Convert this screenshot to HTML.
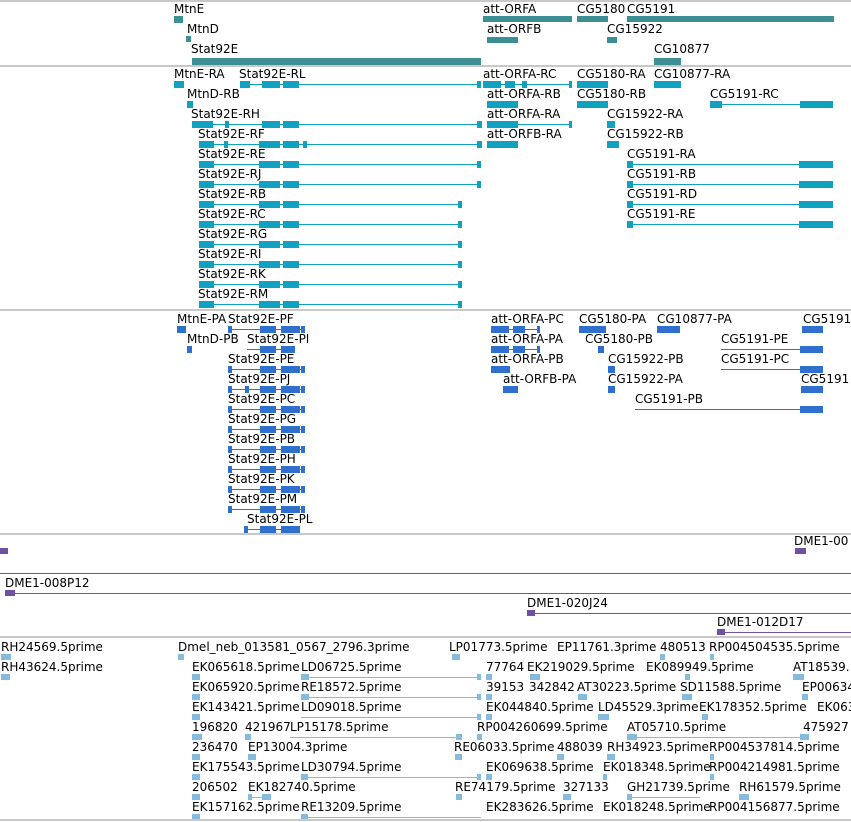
<!DOCTYPE html>
<html><head><meta charset="utf-8"><style>
body{margin:0;width:851px;height:822px;background:#fff;position:relative;overflow:hidden;font-family:"DejaVu Sans","Liberation Sans",sans-serif}
div{position:absolute}
.l{font-size:12px;line-height:14px;white-space:nowrap;color:#000}
.s{left:0;width:851px;height:2px;background:#c8c8c8}
.c1{color:#3d8f96}.c2{color:#10a0c0}.c3{color:#2f6fce}.c4{color:#7050a0}.c5{color:#86bbe0}
.h,.k{background:currentColor}
.h{height:1px}.k{height:7px}
</style></head><body>
<div class="s" style="top:0"></div>
<div class="s" style="top:65px"></div>
<div class="s" style="top:309px"></div>
<div class="s" style="top:533px"></div>
<div class="s" style="top:636px"></div>
<div class="s" style="top:819px"></div>

<!-- track 1 genes -->
<div class="c1">
<div class="l" style="left:174px;top:2px">MtnE</div>
<div class="l" style="left:187px;top:22px">MtnD</div>
<div class="l" style="left:191px;top:42px">Stat92E</div>
<div class="l" style="left:483px;top:2px">att-ORFA</div>
<div class="l" style="left:577px;top:2px">CG5180</div>
<div class="l" style="left:627px;top:2px">CG5191</div>
<div class="l" style="left:487px;top:22px">att-ORFB</div>
<div class="l" style="left:607px;top:22px">CG15922</div>
<div class="l" style="left:654px;top:42px">CG10877</div>
<div class="k" style="left:174px;top:16px;width:9px"></div>
<div class="k" style="left:186px;top:36px;width:5px;height:6px"></div>
<div class="k" style="left:192px;top:58px;width:289px"></div>
<div class="k" style="left:483px;top:16px;width:89px;height:6px"></div>
<div class="k" style="left:577px;top:16px;width:31px;height:6px"></div>
<div class="k" style="left:627px;top:16px;width:207px;height:6px"></div>
<div class="k" style="left:487px;top:37px;width:31px;height:6px"></div>
<div class="k" style="left:607px;top:37px;width:10px;height:6px"></div>
<div class="k" style="left:654px;top:58px;width:27px"></div>
</div>

<!-- track 2 transcripts -->
<div class="c2">
<div class="l" style="left:174px;top:67px">MtnE-RA</div>
<div class="k" style="left:174px;top:81px;width:10px"></div>
<div class="l" style="left:239px;top:67px">Stat92E-RL</div>
<div class="h" style="left:240px;top:84px;width:241px"></div>
<div class="k" style="left:240px;top:81px;width:10px"></div><div class="k" style="left:262px;top:81px;width:18px"></div><div class="k" style="left:283px;top:81px;width:16px"></div><div class="k" style="left:477px;top:81px;width:4px"></div>
<div class="l" style="left:483px;top:67px">att-ORFA-RC</div>
<div class="h" style="left:483px;top:84px;width:89px"></div>
<div class="k" style="left:483px;top:81px;width:18px"></div><div class="k" style="left:505px;top:81px;width:10px"></div><div class="k" style="left:522px;top:81px;width:5px"></div><div class="k" style="left:569px;top:81px;width:3px"></div>
<div class="l" style="left:577px;top:67px">CG5180-RA</div>
<div class="k" style="left:577px;top:81px;width:31px"></div>
<div class="l" style="left:654px;top:67px">CG10877-RA</div>
<div class="k" style="left:654px;top:81px;width:27px"></div>

<div class="l" style="left:187px;top:87px">MtnD-RB</div>
<div class="k" style="left:187px;top:101px;width:6px"></div>
<div class="l" style="left:487px;top:87px">att-ORFA-RB</div>
<div class="k" style="left:487px;top:101px;width:31px"></div>
<div class="l" style="left:577px;top:87px">CG5180-RB</div>
<div class="k" style="left:577px;top:101px;width:31px"></div>
<div class="l" style="left:710px;top:87px">CG5191-RC</div>
<div class="h" style="left:710px;top:104px;width:90px"></div>
<div class="k" style="left:710px;top:101px;width:12px"></div><div class="k" style="left:800px;top:101px;width:33px"></div>

<div class="l" style="left:191px;top:107px">Stat92E-RH</div>
<div class="h" style="left:192px;top:124px;width:289px"></div>
<div class="k" style="left:192px;top:121px;width:21px"></div><div class="k" style="left:225px;top:121px;width:4px"></div><div class="k" style="left:262px;top:121px;width:18px"></div><div class="k" style="left:283px;top:121px;width:16px"></div><div class="k" style="left:477px;top:121px;width:4px"></div>
<div class="l" style="left:487px;top:107px">att-ORFA-RA</div>
<div class="h" style="left:487px;top:124px;width:85px"></div>
<div class="k" style="left:480px;top:121px;width:2px"></div><div class="k" style="left:487px;top:121px;width:31px"></div><div class="k" style="left:569px;top:121px;width:3px"></div>
<div class="l" style="left:607px;top:107px">CG15922-RA</div>
<div class="k" style="left:607px;top:121px;width:8px"></div>

<div class="l" style="left:198px;top:127px">Stat92E-RF</div>
<div class="h" style="left:199px;top:144px;width:282px"></div>
<div class="k" style="left:199px;top:141px;width:15px"></div><div class="k" style="left:224px;top:141px;width:4px"></div><div class="k" style="left:259px;top:141px;width:21px"></div><div class="k" style="left:283px;top:141px;width:16px"></div><div class="k" style="left:303px;top:141px;width:4px"></div><div class="k" style="left:477px;top:141px;width:4px"></div>
<div class="l" style="left:487px;top:127px">att-ORFB-RA</div>
<div class="k" style="left:480px;top:141px;width:2px"></div><div class="k" style="left:487px;top:141px;width:31px"></div>
<div class="l" style="left:607px;top:127px">CG15922-RB</div>
<div class="k" style="left:607px;top:141px;width:12px"></div>
</div>

<!-- Stat92E transcripts rows 4-11 -->
<div class="c2">
<div class="l" style="left:198px;top:147px">Stat92E-RE</div>
<div class="h" style="left:199px;top:164px;width:282px"></div><div class="k" style="left:199px;top:161px;width:15px"></div><div class="k" style="left:259px;top:161px;width:21px"></div><div class="k" style="left:283px;top:161px;width:16px"></div><div class="k" style="left:477px;top:161px;width:4px"></div>
<div class="l" style="left:198px;top:167px">Stat92E-RJ</div>
<div class="h" style="left:199px;top:184px;width:282px"></div><div class="k" style="left:199px;top:181px;width:15px"></div><div class="k" style="left:259px;top:181px;width:21px"></div><div class="k" style="left:283px;top:181px;width:16px"></div><div class="k" style="left:477px;top:181px;width:4px"></div>
<div class="l" style="left:198px;top:187px">Stat92E-RB</div>
<div class="h" style="left:199px;top:204px;width:263px"></div><div class="k" style="left:199px;top:201px;width:15px"></div><div class="k" style="left:259px;top:201px;width:21px"></div><div class="k" style="left:283px;top:201px;width:16px"></div><div class="k" style="left:458px;top:201px;width:4px"></div>
<div class="l" style="left:198px;top:207px">Stat92E-RC</div>
<div class="h" style="left:199px;top:224px;width:263px"></div><div class="k" style="left:199px;top:221px;width:15px"></div><div class="k" style="left:259px;top:221px;width:21px"></div><div class="k" style="left:283px;top:221px;width:16px"></div><div class="k" style="left:458px;top:221px;width:4px"></div>
<div class="l" style="left:198px;top:227px">Stat92E-RG</div>
<div class="h" style="left:199px;top:244px;width:263px"></div><div class="k" style="left:199px;top:241px;width:15px"></div><div class="k" style="left:259px;top:241px;width:21px"></div><div class="k" style="left:283px;top:241px;width:16px"></div><div class="k" style="left:458px;top:241px;width:4px"></div>
<div class="l" style="left:198px;top:247px">Stat92E-RI</div>
<div class="h" style="left:199px;top:264px;width:263px"></div><div class="k" style="left:199px;top:261px;width:15px"></div><div class="k" style="left:259px;top:261px;width:21px"></div><div class="k" style="left:283px;top:261px;width:16px"></div><div class="k" style="left:458px;top:261px;width:4px"></div>
<div class="l" style="left:198px;top:267px">Stat92E-RK</div>
<div class="h" style="left:199px;top:284px;width:263px"></div><div class="k" style="left:199px;top:281px;width:15px"></div><div class="k" style="left:259px;top:281px;width:21px"></div><div class="k" style="left:283px;top:281px;width:16px"></div><div class="k" style="left:458px;top:281px;width:4px"></div>
<div class="l" style="left:198px;top:287px">Stat92E-RM</div>
<div class="h" style="left:199px;top:304px;width:263px"></div><div class="k" style="left:199px;top:301px;width:15px"></div><div class="k" style="left:259px;top:301px;width:21px"></div><div class="k" style="left:283px;top:301px;width:16px"></div><div class="k" style="left:458px;top:301px;width:4px"></div>

<div class="l" style="left:627px;top:147px">CG5191-RA</div>
<div class="h" style="left:627px;top:164px;width:173px"></div><div class="k" style="left:627px;top:161px;width:6px"></div><div class="k" style="left:799px;top:161px;width:34px"></div>
<div class="l" style="left:627px;top:167px">CG5191-RB</div>
<div class="h" style="left:627px;top:184px;width:173px"></div><div class="k" style="left:627px;top:181px;width:6px"></div><div class="k" style="left:799px;top:181px;width:34px"></div>
<div class="l" style="left:627px;top:187px">CG5191-RD</div>
<div class="h" style="left:627px;top:204px;width:173px"></div><div class="k" style="left:627px;top:201px;width:6px"></div><div class="k" style="left:799px;top:201px;width:34px"></div>
<div class="l" style="left:627px;top:207px">CG5191-RE</div>
<div class="h" style="left:627px;top:224px;width:173px"></div><div class="k" style="left:627px;top:221px;width:6px"></div><div class="k" style="left:799px;top:221px;width:34px"></div>
</div>

<!-- track 3 proteins -->
<div class="c3">
<div class="l" style="left:177px;top:312px">MtnE-PA</div>
<div class="k" style="left:177px;top:326px;width:9px"></div>
<div class="l" style="left:187px;top:332px">MtnD-PB</div>
<div class="k" style="left:187px;top:346px;width:5px"></div>
<div class="l" style="left:491px;top:312px">att-ORFA-PC</div>
<div class="h" style="left:491px;top:329px;width:49px"></div><div class="k" style="left:491px;top:326px;width:18px"></div><div class="k" style="left:513px;top:326px;width:12px"></div><div class="k" style="left:537px;top:326px;width:3px"></div>
<div class="l" style="left:491px;top:332px">att-ORFA-PA</div>
<div class="h" style="left:491px;top:349px;width:49px"></div><div class="k" style="left:491px;top:346px;width:18px"></div><div class="k" style="left:513px;top:346px;width:12px"></div><div class="k" style="left:537px;top:346px;width:3px"></div>
<div class="l" style="left:491px;top:352px">att-ORFA-PB</div>
<div class="k" style="left:491px;top:366px;width:19px"></div>
<div class="l" style="left:503px;top:372px">att-ORFB-PA</div>
<div class="k" style="left:503px;top:386px;width:15px"></div>
<div class="l" style="left:579px;top:312px">CG5180-PA</div>
<div class="k" style="left:579px;top:326px;width:27px"></div>
<div class="l" style="left:585px;top:332px">CG5180-PB</div>
<div class="k" style="left:598px;top:346px;width:6px"></div>
<div class="l" style="left:657px;top:312px">CG10877-PA</div>
<div class="k" style="left:657px;top:326px;width:23px"></div>
<div class="l" style="left:803px;top:312px">CG5191</div>
<div class="k" style="left:802px;top:326px;width:21px"></div>
<div class="l" style="left:608px;top:352px">CG15922-PB</div>
<div class="k" style="left:608px;top:366px;width:7px"></div>
<div class="l" style="left:608px;top:372px">CG15922-PA</div>
<div class="k" style="left:608px;top:386px;width:7px"></div>
<div class="l" style="left:721px;top:332px">CG5191-PE</div>
<div class="h" style="left:721px;top:349px;width:80px"></div><div class="k" style="left:800px;top:346px;width:23px"></div>
<div class="l" style="left:721px;top:352px">CG5191-PC</div>
<div class="h" style="left:721px;top:369px;width:80px"></div><div class="k" style="left:800px;top:366px;width:23px"></div>
<div class="l" style="left:801px;top:372px">CG5191</div>
<div class="k" style="left:801px;top:386px;width:22px"></div>
<div class="l" style="left:635px;top:392px">CG5191-PB</div>
<div class="h" style="left:635px;top:409px;width:166px"></div><div class="k" style="left:800px;top:406px;width:23px"></div>

<div class="l" style="left:228px;top:312px">Stat92E-PF</div>
<div class="h" style="left:228px;top:329px;width:77px"></div><div class="k" style="left:228px;top:326px;width:4px"></div><div class="k" style="left:260px;top:326px;width:16px"></div><div class="k" style="left:281px;top:326px;width:19px"></div><div class="k" style="left:301px;top:326px;width:4px"></div>
<div class="l" style="left:247px;top:332px">Stat92E-PI</div>
<div class="h" style="left:247px;top:349px;width:48px"></div><div class="k" style="left:260px;top:346px;width:16px"></div><div class="k" style="left:281px;top:346px;width:14px"></div>
<div class="l" style="left:228px;top:352px">Stat92E-PE</div>
<div class="h" style="left:228px;top:369px;width:77px"></div><div class="k" style="left:228px;top:366px;width:4px"></div><div class="k" style="left:260px;top:366px;width:16px"></div><div class="k" style="left:281px;top:366px;width:19px"></div><div class="k" style="left:301px;top:366px;width:4px"></div>
<div class="l" style="left:228px;top:372px">Stat92E-PJ</div>
<div class="h" style="left:228px;top:389px;width:77px"></div><div class="k" style="left:228px;top:386px;width:4px"></div><div class="k" style="left:245px;top:386px;width:4px"></div><div class="k" style="left:260px;top:386px;width:16px"></div><div class="k" style="left:281px;top:386px;width:19px"></div><div class="k" style="left:301px;top:386px;width:4px"></div>
<div class="l" style="left:228px;top:392px">Stat92E-PC</div>
<div class="h" style="left:228px;top:409px;width:77px"></div><div class="k" style="left:228px;top:406px;width:4px"></div><div class="k" style="left:260px;top:406px;width:16px"></div><div class="k" style="left:281px;top:406px;width:19px"></div><div class="k" style="left:301px;top:406px;width:4px"></div>
<div class="l" style="left:228px;top:412px">Stat92E-PG</div>
<div class="h" style="left:228px;top:429px;width:77px"></div><div class="k" style="left:228px;top:426px;width:4px"></div><div class="k" style="left:260px;top:426px;width:16px"></div><div class="k" style="left:281px;top:426px;width:19px"></div><div class="k" style="left:301px;top:426px;width:4px"></div>
<div class="l" style="left:228px;top:432px">Stat92E-PB</div>
<div class="h" style="left:228px;top:449px;width:77px"></div><div class="k" style="left:228px;top:446px;width:4px"></div><div class="k" style="left:260px;top:446px;width:16px"></div><div class="k" style="left:281px;top:446px;width:19px"></div><div class="k" style="left:301px;top:446px;width:4px"></div>
<div class="l" style="left:228px;top:452px">Stat92E-PH</div>
<div class="h" style="left:228px;top:469px;width:77px"></div><div class="k" style="left:228px;top:466px;width:4px"></div><div class="k" style="left:260px;top:466px;width:16px"></div><div class="k" style="left:281px;top:466px;width:19px"></div><div class="k" style="left:301px;top:466px;width:4px"></div>
<div class="l" style="left:228px;top:472px">Stat92E-PK</div>
<div class="h" style="left:228px;top:489px;width:77px"></div><div class="k" style="left:228px;top:486px;width:4px"></div><div class="k" style="left:260px;top:486px;width:16px"></div><div class="k" style="left:281px;top:486px;width:19px"></div><div class="k" style="left:301px;top:486px;width:4px"></div>
<div class="l" style="left:228px;top:492px">Stat92E-PM</div>
<div class="h" style="left:228px;top:509px;width:77px"></div><div class="k" style="left:228px;top:506px;width:4px"></div><div class="k" style="left:260px;top:506px;width:16px"></div><div class="k" style="left:281px;top:506px;width:19px"></div><div class="k" style="left:301px;top:506px;width:4px"></div>
<div class="l" style="left:247px;top:512px">Stat92E-PL</div>
<div class="h" style="left:244px;top:529px;width:56px"></div><div class="k" style="left:244px;top:526px;width:4px"></div><div class="k" style="left:260px;top:526px;width:16px"></div><div class="k" style="left:281px;top:526px;width:19px"></div>
</div>

<!-- track 4 DME -->
<div class="c4">
<div class="k" style="left:0;top:548px;width:8px;height:6px"></div>
<div class="l" style="left:794px;top:534px">DME1-00</div>
<div class="k" style="left:795px;top:548px;width:11px;height:6px"></div>
<div class="h" style="left:0;top:573px;width:851px"></div>
<div class="l" style="left:5px;top:576px">DME1-008P12</div>
<div class="h" style="left:5px;top:593px;width:846px"></div><div class="k" style="left:5px;top:590px;width:10px;height:6px"></div>
<div class="l" style="left:527px;top:596px">DME1-020J24</div>
<div class="h" style="left:527px;top:613px;width:324px"></div><div class="k" style="left:527px;top:610px;width:8px;height:6px"></div>
<div class="l" style="left:717px;top:615px">DME1-012D17</div>
<div class="h" style="left:717px;top:632px;width:134px"></div><div class="k" style="left:717px;top:629px;width:8px;height:6px"></div>
</div>

<!-- track 5 ESTs -->
<div class="c5">
<div class="l" style="left:1px;top:640px">RH24569.5prime</div><div class="k" style="left:1px;top:654px;width:10px;height:6px"></div>
<div class="l" style="left:178px;top:640px">Dmel_neb_013581_0567_2796.3prime</div><div class="k" style="left:178px;top:654px;width:6px;height:6px"></div>
<div class="l" style="left:449px;top:640px">LP01773.5prime</div><div class="k" style="left:452px;top:654px;width:8px;height:6px"></div>
<div class="l" style="left:557px;top:640px">EP11761.3prime</div>
<div class="l" style="left:660px;top:640px">480513</div><div class="k" style="left:660px;top:654px;width:5px;height:6px"></div>
<div class="l" style="left:709px;top:640px">RP004504535.5prime</div><div class="k" style="left:710px;top:654px;width:4px;height:6px"></div>

<div class="l" style="left:1px;top:660px">RH43624.5prime</div><div class="k" style="left:1px;top:674px;width:9px;height:6px"></div>
<div class="l" style="left:192px;top:660px">EK065618.5prime</div><div class="k" style="left:192px;top:674px;width:8px;height:6px"></div>
<div class="l" style="left:301px;top:660px">LD06725.5prime</div><div class="h" style="left:301px;top:677px;width:180px"></div><div class="k" style="left:301px;top:674px;width:8px;height:6px"></div><div class="k" style="left:477px;top:674px;width:4px;height:6px"></div>
<div class="l" style="left:486px;top:660px">77764</div><div class="k" style="left:486px;top:674px;width:6px;height:6px"></div>
<div class="l" style="left:527px;top:660px">EK219029.5prime</div><div class="k" style="left:530px;top:674px;width:10px;height:6px"></div>
<div class="l" style="left:646px;top:660px">EK089949.5prime</div><div class="k" style="left:685px;top:674px;width:5px;height:6px"></div>
<div class="l" style="left:793px;top:660px">AT18539.</div><div class="k" style="left:793px;top:674px;width:11px;height:6px"></div>

<div class="l" style="left:192px;top:680px">EK065920.5prime</div><div class="k" style="left:192px;top:694px;width:8px;height:6px"></div>
<div class="l" style="left:301px;top:680px">RE18572.5prime</div><div class="h" style="left:301px;top:697px;width:180px"></div><div class="k" style="left:301px;top:694px;width:8px;height:6px"></div><div class="k" style="left:477px;top:694px;width:4px;height:6px"></div>
<div class="l" style="left:486px;top:680px">39153</div><div class="k" style="left:486px;top:694px;width:6px;height:6px"></div>
<div class="l" style="left:529px;top:680px">342842</div>
<div class="l" style="left:577px;top:680px">AT30223.5prime</div><div class="k" style="left:578px;top:694px;width:9px;height:6px"></div>
<div class="l" style="left:680px;top:680px">SD11588.5prime</div><div class="k" style="left:682px;top:694px;width:10px;height:6px"></div>
<div class="l" style="left:802px;top:680px">EP00634</div><div class="k" style="left:802px;top:694px;width:6px;height:6px"></div>

<div class="l" style="left:192px;top:700px">EK143421.5prime</div><div class="k" style="left:192px;top:714px;width:8px;height:6px"></div>
<div class="l" style="left:301px;top:700px">LD09018.5prime</div><div class="h" style="left:301px;top:717px;width:180px"></div><div class="k" style="left:477px;top:714px;width:4px;height:6px"></div>
<div class="l" style="left:486px;top:700px">EK044840.5prime</div><div class="k" style="left:486px;top:714px;width:6px;height:6px"></div>
<div class="l" style="left:598px;top:700px">LD45529.3prime</div><div class="k" style="left:598px;top:714px;width:11px;height:6px"></div>
<div class="l" style="left:699px;top:700px">EK178352.5prime</div><div class="k" style="left:702px;top:714px;width:6px;height:6px"></div>
<div class="l" style="left:817px;top:700px">EK063</div>

<div class="l" style="left:192px;top:720px">196820</div><div class="k" style="left:192px;top:734px;width:10px;height:6px"></div>
<div class="l" style="left:245px;top:720px">421967</div><div class="k" style="left:245px;top:734px;width:6px;height:6px"></div>
<div class="l" style="left:290px;top:720px">LP15178.5prime</div><div class="h" style="left:290px;top:737px;width:172px"></div><div class="k" style="left:456px;top:734px;width:6px;height:6px"></div>
<div class="l" style="left:477px;top:720px">RP004260699.5prime</div><div class="k" style="left:477px;top:734px;width:5px;height:6px"></div>
<div class="l" style="left:627px;top:720px">AT05710.5prime</div><div class="h" style="left:627px;top:737px;width:173px"></div><div class="k" style="left:627px;top:734px;width:10px;height:6px"></div><div class="k" style="left:800px;top:734px;width:9px;height:6px"></div>
<div class="l" style="left:803px;top:720px">475927</div>

<div class="l" style="left:192px;top:740px">236470</div><div class="k" style="left:192px;top:754px;width:8px;height:6px"></div>
<div class="l" style="left:248px;top:740px">EP13004.3prime</div><div class="k" style="left:248px;top:754px;width:8px;height:6px"></div>
<div class="l" style="left:454px;top:740px">RE06033.5prime</div><div class="k" style="left:455px;top:754px;width:7px;height:6px"></div>
<div class="l" style="left:557px;top:740px">488039</div><div class="k" style="left:557px;top:754px;width:7px;height:6px"></div>
<div class="l" style="left:607px;top:740px">RH34923.5prime</div><div class="k" style="left:607px;top:754px;width:8px;height:6px"></div>
<div class="l" style="left:709px;top:740px">RP004537814.5prime</div><div class="k" style="left:710px;top:754px;width:4px;height:6px"></div>

<div class="l" style="left:192px;top:760px">EK175543.5prime</div><div class="k" style="left:192px;top:774px;width:8px;height:6px"></div>
<div class="l" style="left:301px;top:760px">LD30794.5prime</div><div class="h" style="left:301px;top:777px;width:180px"></div><div class="k" style="left:301px;top:774px;width:7px;height:6px"></div><div class="k" style="left:477px;top:774px;width:4px;height:6px"></div>
<div class="l" style="left:486px;top:760px">EK069638.5prime</div><div class="k" style="left:486px;top:774px;width:6px;height:6px"></div>
<div class="l" style="left:603px;top:760px">EK018348.5prime</div><div class="k" style="left:603px;top:774px;width:4px;height:6px"></div>
<div class="l" style="left:709px;top:760px">RP004214981.5prime</div><div class="k" style="left:710px;top:774px;width:4px;height:6px"></div>

<div class="l" style="left:192px;top:780px">206502</div><div class="k" style="left:192px;top:794px;width:8px;height:6px"></div>
<div class="l" style="left:248px;top:780px">EK182740.5prime</div><div class="h" style="left:248px;top:797px;width:22px"></div><div class="k" style="left:248px;top:794px;width:4px;height:6px"></div><div class="k" style="left:262px;top:794px;width:9px;height:6px"></div>
<div class="l" style="left:455px;top:780px">RE74179.5prime</div><div class="k" style="left:456px;top:794px;width:6px;height:6px"></div>
<div class="l" style="left:563px;top:780px">327133</div><div class="k" style="left:563px;top:794px;width:8px;height:6px"></div>
<div class="l" style="left:627px;top:780px">GH21739.5prime</div><div class="h" style="left:627px;top:797px;width:73px"></div><div class="k" style="left:627px;top:794px;width:5px;height:6px"></div>
<div class="l" style="left:739px;top:780px">RH61579.5prime</div><div class="k" style="left:739px;top:794px;width:10px;height:6px"></div>

<div class="l" style="left:192px;top:800px">EK157162.5prime</div><div class="k" style="left:192px;top:814px;width:8px;height:5px"></div>
<div class="l" style="left:301px;top:800px">RE13209.5prime</div><div class="h" style="left:301px;top:817px;width:180px"></div><div class="k" style="left:301px;top:814px;width:7px;height:5px"></div>
<div class="l" style="left:486px;top:800px">EK283626.5prime</div>
<div class="l" style="left:603px;top:800px">EK018248.5prime</div>
<div class="l" style="left:709px;top:800px">RP004156877.5prime</div>
</div>
</body></html>
